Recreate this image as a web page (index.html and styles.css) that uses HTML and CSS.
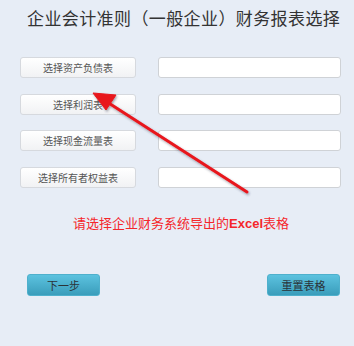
FILE: index.html
```html
<!DOCTYPE html>
<html lang="zh-CN">
<head>
    <meta charset="UTF-8">
    <meta name="viewport" content="width=device-width, initial-scale=1.0">
    <title>财务报表选择</title>
    <link rel="stylesheet" href="styles.css">
</head>
<body>
    <div class="page">
        <div class="title">企业会计准则（一般企业）财务报表选择</div>

        <div class="rows">
            <div class="row">
                <button class="pick-btn">选择资产负债表</button>
                <input type="text" class="file-box">
            </div>
            <div class="row">
                <button class="pick-btn">选择利润表</button>
                <input type="text" class="file-box">
            </div>
            <div class="row">
                <button class="pick-btn">选择现金流量表</button>
                <input type="text" class="file-box">
            </div>
            <div class="row">
                <button class="pick-btn">选择所有者权益表</button>
                <input type="text" class="file-box">
            </div>
        </div>

        <div class="hint">请选择企业财务系统导出的<b>Excel</b>表格</div>

        <div class="actions">
            <button class="blue-btn">下一步</button>
            <button class="blue-btn">重置表格</button>
        </div>

        <!-- annotation arrow drawn over the form -->
        <svg class="arrow" width="354" height="346" viewBox="0 0 354 346">
            <defs>
                <filter id="sh" x="-20%" y="-20%" width="140%" height="140%">
                    <feDropShadow dx="1" dy="1.5" stdDeviation="1.2" flood-color="#334" flood-opacity="0.45"/>
                </filter>
            </defs>
            <g filter="url(#sh)" fill="#e8151b" stroke="#e8151b">
                <line x1="247" y1="192" x2="104" y2="100" stroke-width="3" stroke-linecap="round"/>
                <polygon points="93,93 116,95 106,110" stroke-width="1" stroke-linejoin="round"/>
            </g>
        </svg>
    </div>
</body>
</html>
```

FILE: styles.css
```css
body {
    margin: 0;
    padding: 0;
    background-color: #e7edf6;
    font-family: "Noto Sans CJK SC", "Liberation Sans", sans-serif;
}

.page {
    position: relative;
    width: 354px;
    height: 346px;
    overflow: hidden;
}

.title {
    padding: 7px 0 0 27px;
    font-size: 17px;
    line-height: 22px;
    color: #333;
    letter-spacing: 0.4px;
}

.rows {
    margin-top: 28px;
    padding-left: 20px;
    display: flex;
    flex-direction: column;
    gap: 15.7px;
}

.row {
    display: flex;
    gap: 22px;
    height: 21px;
}

.pick-btn {
    width: 116px;
    height: 21px;
    padding: 0;
    border: 1px solid #d6d9de;
    border-radius: 3px;
    background: linear-gradient(#ffffff, #f1f2f4);
    font-family: inherit;
    font-size: 10px;
    color: #555;
}

.file-box {
    width: 183px;
    height: 21px;
    box-sizing: border-box;
    border: 1px solid #cfd2d6;
    border-radius: 3px;
    background: #fff;
    padding: 0 4px;
}

.hint {
    margin-top: 26px;
    padding-left: 73px;
    font-size: 13px;
    line-height: 18px;
    color: #f5262b;
}

.hint b {
    font-family: "Liberation Sans", sans-serif;
}

.actions {
    margin-top: 41px;
    padding: 0 14px 0 27px;
    display: flex;
    justify-content: space-between;
}

.blue-btn {
    width: 73px;
    height: 22px;
    padding: 0;
    border: 1px solid #4fb0cc;
    border-radius: 3px;
    background: linear-gradient(#5cc2df, #3a9dbb);
    font-family: inherit;
    font-size: 11px;
    color: #2a3338;
}

.arrow {
    position: absolute;
    left: 0;
    top: 0;
    pointer-events: none;
}
```
